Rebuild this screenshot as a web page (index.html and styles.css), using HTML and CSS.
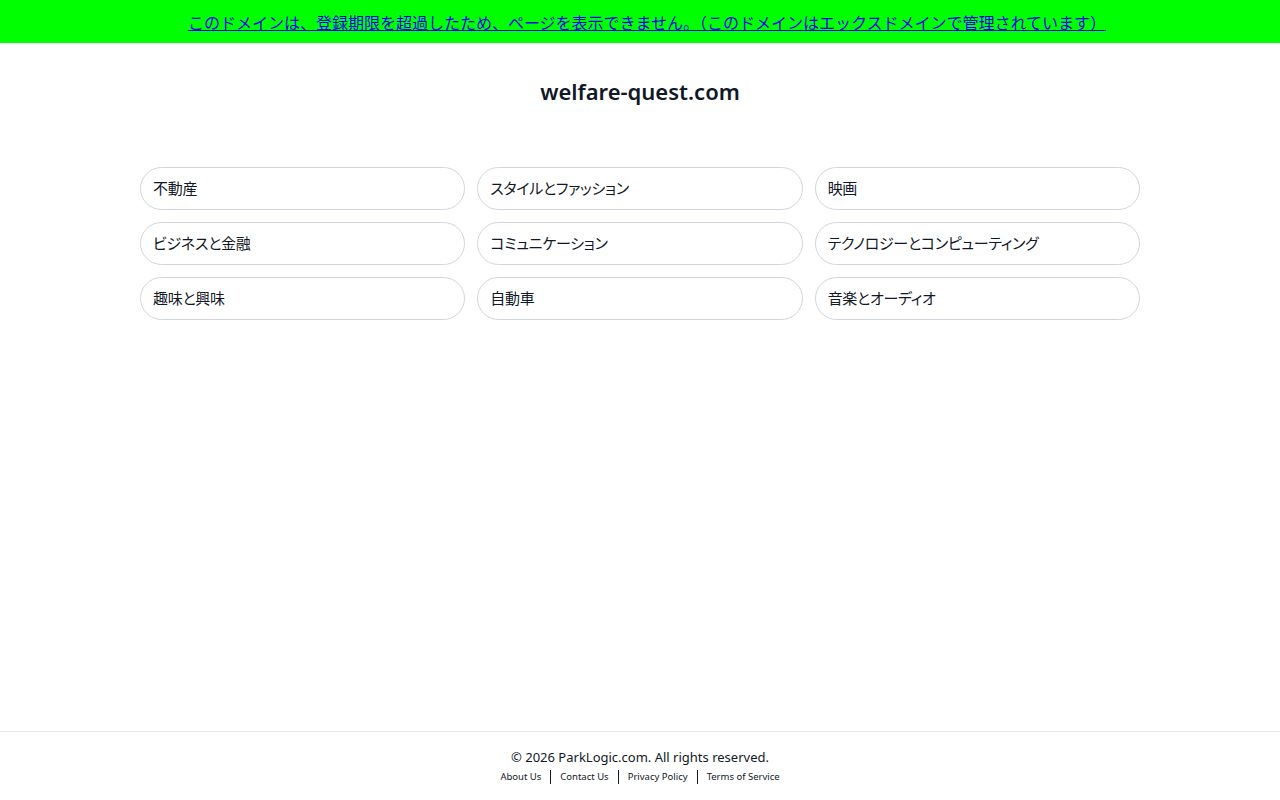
FILE: index.html
```html
<!DOCTYPE html>
<html lang="ja">
    <head>
        <meta charset="utf-8">
        <title>welfare-quest.com</title>
        <link rel="stylesheet" href="styles.css">
    </head>
    <body>
        <div class="page">
            <div class="notice">
                <a href="#">このドメインは、登録期限を超過したため、ページを表示できません。（このドメインはエックスドメインで管理されています）</a>
            </div>
            <div class="main">
                <h1 class="domain">welfare-quest.com</h1>
                <div class="links">
                    <a class="link" href="#">不動産</a>
                    <a class="link" href="#">スタイルとファッション</a>
                    <a class="link" href="#">映画</a>
                    <a class="link" href="#">ビジネスと金融</a>
                    <a class="link" href="#">コミュニケーション</a>
                    <a class="link" href="#">テクノロジーとコンピューティング</a>
                    <a class="link" href="#">趣味と興味</a>
                    <a class="link" href="#">自動車</a>
                    <a class="link" href="#">音楽とオーディオ</a>
                </div>
            </div>
            <div class="footer">
                <div class="copy">© 2026 ParkLogic.com. All rights reserved.</div>
                <div class="footer-links">
                    <a href="#">About Us</a>
                    <a href="#">Contact Us</a>
                    <a href="#">Privacy Policy</a>
                    <a href="#">Terms of Service</a>
                </div>
            </div>
        </div>
    </body>
</html>
```

FILE: styles.css
```css
body {
    margin: 0;
    font-family: "Noto Sans", "Noto Sans CJK JP", sans-serif;
    color: #111827;
    background: #fff;
}
.page {
    min-height: 100vh;
    display: flex;
    flex-direction: column;
}
.notice {
    background: #00ff00;
    height: 43px;
    display: flex;
    align-items: center;
    justify-content: center;
    padding-left: 14px;
    font-size: 16px;
}
.notice a {
    color: #0000ee;
    text-decoration: underline;
}
.main {
    flex: 1;
}
.domain {
    margin: 32px 0 0;
    text-align: center;
    font-size: 22px;
    font-weight: 600;
    line-height: 32px;
    color: #111827;
}
.links {
    width: 1000px;
    margin: 60px auto 0;
    display: grid;
    grid-template-columns: repeat(3, 1fr);
    gap: 12px;
}
.link {
    display: flex;
    align-items: center;
    height: 41px;
    padding: 0 12px 2px;
    box-sizing: content-box;
    border: 1px solid #d1d5db;
    border-radius: 22px;
    font-size: 15px;
    font-feature-settings: "palt";
    letter-spacing: -0.3px;
    color: #111827;
    text-decoration: none;
}
.link {
    height: 39px;
}
.footer {
    border-top: 1px solid #e5e7eb;
    height: 68px;
    text-align: center;
}
.copy {
    margin-top: 15px;
    font-size: 13px;
    line-height: 20px;
}
.footer-links {
    margin-top: 3px;
    font-size: 9.5px;
    line-height: 14px;
    display: flex;
    justify-content: center;
}
.footer-links a {
    color: #111827;
    text-decoration: none;
    padding: 0 9px;
    border-left: 1px solid #111827;
}
.footer-links a:first-child {
    border-left: none;
}
```
